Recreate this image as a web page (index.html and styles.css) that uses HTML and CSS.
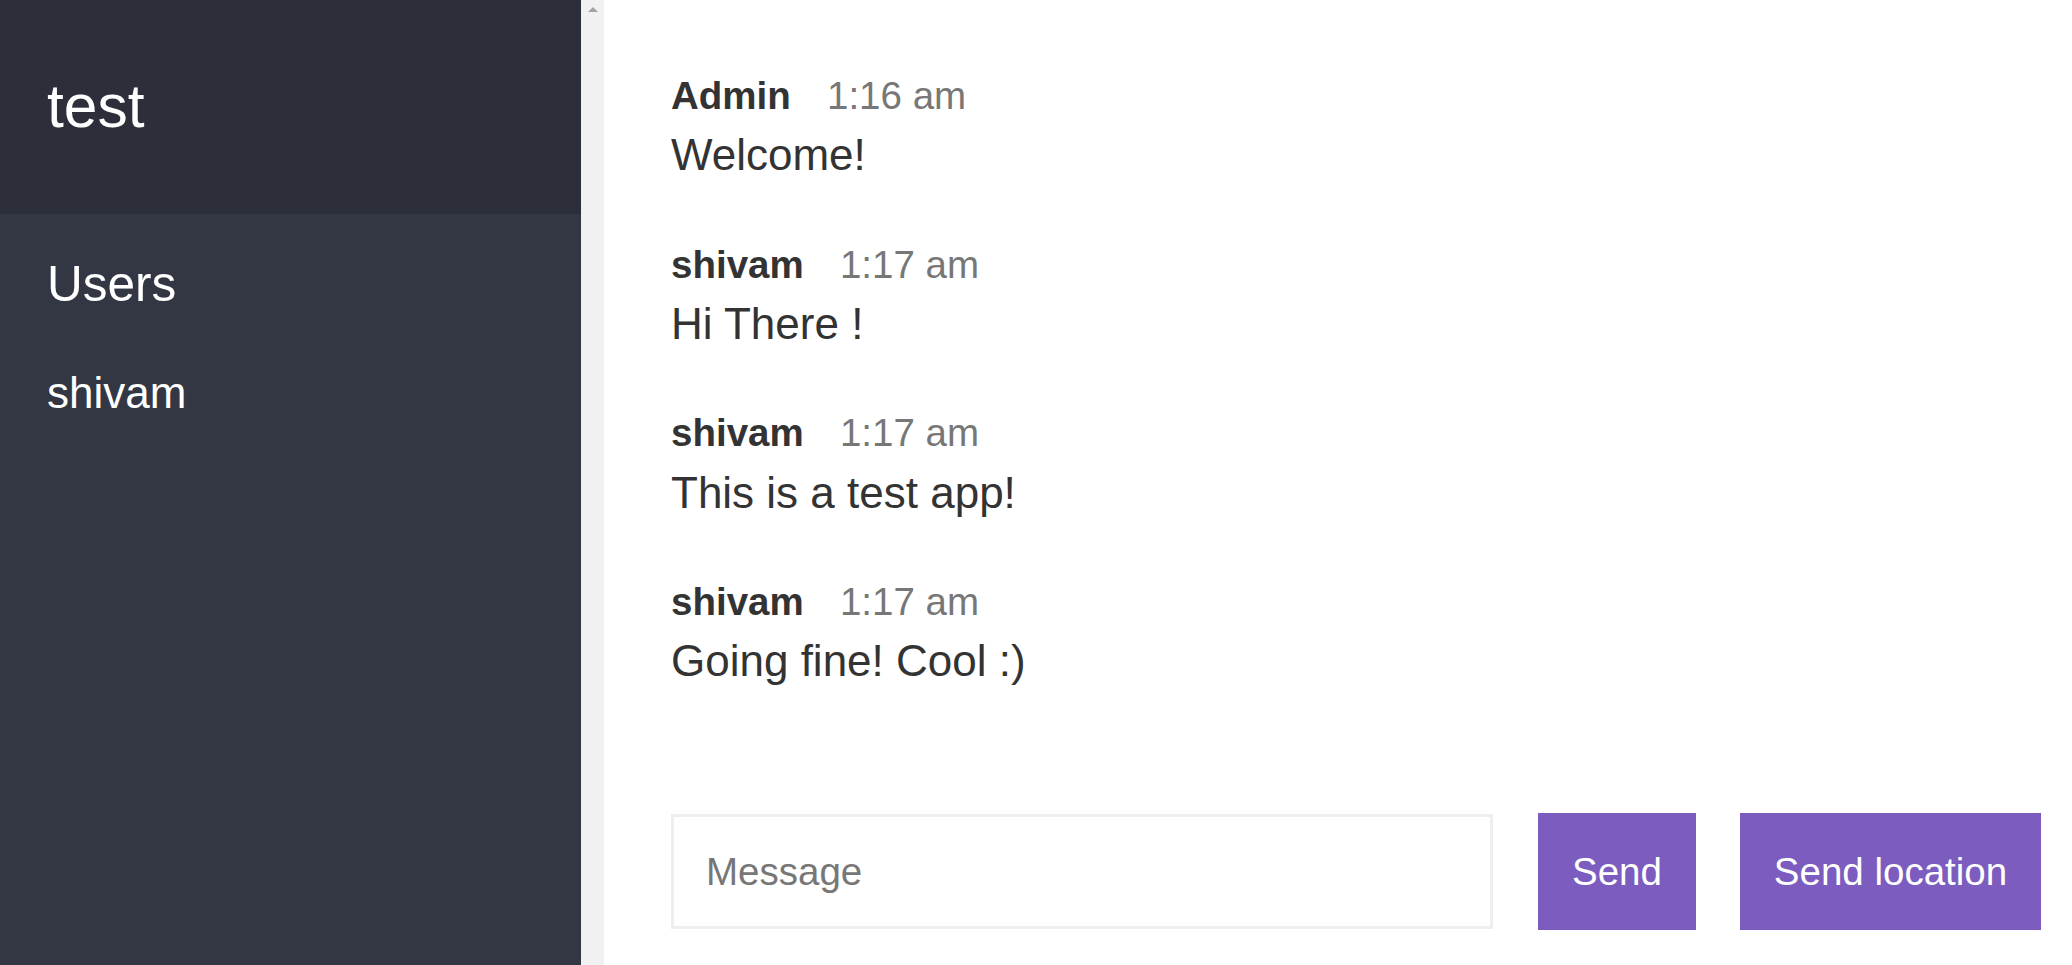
FILE: index.html
```html
<!DOCTYPE html>
<html lang="en">
<head>
<meta charset="utf-8">
<title>Chat</title>
<link rel="stylesheet" href="styles.css">
</head>
<body>
<div class="chat">
  <aside class="sidebar">
    <div class="sidebar__content">
      <h2 class="room-title">test</h2>
      <h3 class="list-title">Users</h3>
      <ul class="users">
        <li>shivam</li>
      </ul>
    </div>
    <div class="scroll-track"><span class="scroll-arrow"></span></div>
  </aside>
  <main class="chat__main">
    <div class="messages">
      <div class="message">
        <p class="message__head"><span class="message__name">Admin</span> <span class="message__meta">1:16 am</span></p>
        <p class="message__text">Welcome!</p>
      </div>
      <div class="message">
        <p class="message__head"><span class="message__name">shivam</span> <span class="message__meta">1:17 am</span></p>
        <p class="message__text">Hi There !</p>
      </div>
      <div class="message">
        <p class="message__head"><span class="message__name">shivam</span> <span class="message__meta">1:17 am</span></p>
        <p class="message__text">This is a test app!</p>
      </div>
      <div class="message">
        <p class="message__head"><span class="message__name">shivam</span> <span class="message__meta">1:17 am</span></p>
        <p class="message__text">Going fine! Cool :)</p>
      </div>
    </div>
    <div class="compose">
      <form class="compose__form">
        <input class="compose__input" type="text" placeholder="Message">
        <button class="btn btn--send" type="button">Send</button>
      </form>
      <button class="btn btn--location" type="button">Send location</button>
    </div>
  </main>
</div>
</body>
</html>
```

FILE: styles.css
```css
* {
  margin: 0;
  padding: 0;
  box-sizing: border-box;
}

html, body {
  height: 100%;
}

body {
  font-family: "Liberation Sans", Arial, Helvetica, sans-serif;
  color: #333333;
  font-size: 44px;
  line-height: 1.4;
  background: #ffffff;
  overflow: hidden;
}

.chat {
  display: flex;
  height: 965px;
}

/* Sidebar */
.sidebar {
  display: flex;
  width: 604px;
  flex-shrink: 0;
  height: 100%;
}

.sidebar__content {
  flex: 1;
  background: #333744;
  color: #ffffff;
}

.room-title {
  font-weight: 400;
  font-size: 60.5px;
  line-height: 83px;
  background: #2c2f3a;
  padding: 65px 47px 66px;
}

.list-title {
  font-weight: 400;
  font-size: 49.5px;
  line-height: 68px;
  padding: 36px 47px 0;
  margin-bottom: 11px;
}

.users {
  list-style: none;
  font-size: 44px;
  line-height: 60.5px;
  padding: 34px 47px 0;
}

.scroll-track {
  width: 23px;
  background: #f1f1f1;
  display: flex;
  justify-content: center;
  padding-top: 7px;
}

.scroll-arrow {
  width: 0;
  height: 0;
  border-left: 5px solid transparent;
  border-right: 5px solid transparent;
  border-bottom: 5px solid #a3a3a3;
}

/* Main */
.chat__main {
  flex: 1;
  display: flex;
  flex-direction: column;
  height: 100%;
}

.messages {
  flex: 1;
  padding: 65.3px 67px 0;
}

.message {
  margin-bottom: 47.8px;
}

.message__head {
  line-height: 58.1px;
}

.message__text {
  line-height: 60.7px;
}

.message__name {
  font-weight: 700;
  font-size: 38.5px;
  margin-right: 24px;
}

.message__meta {
  color: #777777;
  font-size: 38.5px;
}

/* Compose */
.compose {
  display: flex;
  align-items: center;
  padding: 0 31px 35px 67px;
}

.compose__form {
  display: flex;
  align-items: center;
  flex: 1;
  margin-right: 44px;
}

.compose__input {
  flex: 1;
  height: 115px;
  border: 3px solid #eeeeee;
  padding: 0 32px;
  font-family: "Liberation Sans", Arial, Helvetica, sans-serif;
  font-size: 38.5px;
  color: #333333;
  margin-right: 45px;
  outline: none;
}

.compose__input::placeholder {
  color: #777777;
}

.btn {
  height: 117px;
  background: #7c5cbf;
  border: none;
  color: #ffffff;
  font-family: "Liberation Sans", Arial, Helvetica, sans-serif;
  font-size: 38.5px;
  cursor: pointer;
}

.btn--send {
  width: 158px;
}

.btn--location {
  width: 301px;
}
```
